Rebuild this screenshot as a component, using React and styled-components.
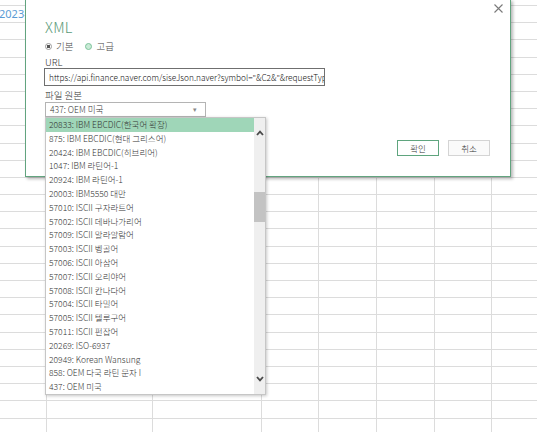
import React from 'react';
import styled, { createGlobalStyle } from 'styled-components';

const GlobalStyle = createGlobalStyle`
  html, body {
    margin: 0;
    padding: 0;
    background: #fff;
    overflow: hidden;
  }
  body {
    font-family: "Noto Sans CJK KR", "Noto Sans", sans-serif;
  }
`;

const COLUMNS = [47, 106, 109, 57, 58, 58, 57, 45];
const ROW_COUNT = 26;

const ENCODINGS = [
  '20833: IBM EBCDIC(한국어 확장)',
  '875: IBM EBCDIC(현대 그리스어)',
  '20424: IBM EBCDIC(히브리어)',
  '1047: IBM 라틴어-1',
  '20924: IBM 라틴어-1',
  '20003: IBM5550 대만',
  '57010: ISCII 구자라트어',
  '57002: ISCII 데바나가리어',
  '57009: ISCII 말라얄람어',
  '57003: ISCII 벵골어',
  '57006: ISCII 아삼어',
  '57007: ISCII 오리야어',
  '57008: ISCII 칸나다어',
  '57004: ISCII 타밀어',
  '57005: ISCII 텔루구어',
  '57011: ISCII 펀잡어',
  '20269: ISO-6937',
  '20949: Korean Wansung',
  '858: OEM 다국 라틴 문자 I',
  '437: OEM 미국',
];

function App() {
  return (
    <Page>
      <GlobalStyle />
      <Sheet>
        {Array.from({ length: ROW_COUNT }).map((_, r) =>
          COLUMNS.map((w, c) => (
            <Cell key={`${r}-${c}`} $last={c === COLUMNS.length - 1}>
              {r === 1 && c === 0 ? <DateText>2023-01-02</DateText> : null}
            </Cell>
          ))
        )}
      </Sheet>

      <Dialog>
        <CloseButton aria-label="닫기">
          <svg width="9" height="9" viewBox="0 0 9 9">
            <path d="M0.5 0.5 L8.5 8.5 M8.5 0.5 L0.5 8.5" stroke="#7a7a7a" strokeWidth="1.1" />
          </svg>
        </CloseButton>
        <Title>XML</Title>
        <RadioRow>
          <RadioOption>
            <Radio $checked />
            기본
          </RadioOption>
          <RadioOption>
            <Radio $hover />
            고급
          </RadioOption>
        </RadioRow>
        <Label>URL</Label>
        <UrlInput>https://api.finance.naver.com/siseJson.naver?symbol="&C2&"&requestTyp</UrlInput>
        <Label $gap>파일 원본</Label>
        <SelectWrap>
          <SelectBox>
            437: OEM 미국
            <Caret>▾</Caret>
          </SelectBox>
          <DropList>
            <Items>
              {ENCODINGS.map((e, i) => (
                <Item key={e} $active={i === 0}>{e}</Item>
              ))}
            </Items>
            <ScrollBar>
              <ScrollArrow>
                <svg width="8" height="6" viewBox="0 0 8 6">
                  <path d="M1 5 L4 1.6 L7 5" fill="none" stroke="#4a4a4a" strokeWidth="1.8" />
                </svg>
              </ScrollArrow>
              <Track>
                <Thumb $offset={44} />
              </Track>
              <ScrollArrow>
                <svg width="8" height="6" viewBox="0 0 8 6">
                  <path d="M1 1 L4 4.4 L7 1" fill="none" stroke="#4a4a4a" strokeWidth="1.8" />
                </svg>
              </ScrollArrow>
            </ScrollBar>
          </DropList>
        </SelectWrap>
        <ButtonRow>
          <Button $primary>확인</Button>
          <Button>취소</Button>
        </ButtonRow>
      </Dialog>
    </Page>
  );
}

export default App;

const Page = styled.div`
  position: relative;
  width: 556px;
  height: 432px;
  overflow: hidden;
  background: #fff;
`;

const Sheet = styled.div`
  display: grid;
  grid-template-columns: ${COLUMNS.map((w) => `${w}px`).join(' ')};
  grid-template-rows: 6px repeat(${ROW_COUNT - 1}, 17.2px);
  width: 537px;
`;

const Cell = styled.div`
  box-sizing: border-box;
  border-bottom: 1px solid #dcdcdc;
  border-right: ${(p) => (p.$last ? 'none' : '1px solid #dcdcdc')};
  overflow: visible;
  white-space: nowrap;
`;

const DateText = styled.div`
  font-family: "Noto Sans", sans-serif;
  font-size: 11px;
  line-height: 16px;
  color: #5b9bd5;
  margin-left: -1px;
`;

const Dialog = styled.div`
  position: absolute;
  left: 25px;
  top: -1px;
  width: 486px;
  height: 178px;
  box-sizing: border-box;
  background: #fff;
  border: 1px solid #62a47f;
  box-shadow: 2px 2px 3px rgba(0, 0, 0, 0.28);
  display: flex;
  flex-direction: column;
  align-items: flex-start;
  padding: 0 0 0 19px;
  color: #333;
  font-weight: 300;
`;

const CloseButton = styled.div`
  position: absolute;
  top: 4px;
  right: 7px;
  width: 9px;
  height: 9px;
  display: flex;
`;

const Title = styled.div`
  margin-top: 19px;
  font-size: 14.5px;
  line-height: 16px;
  color: #5a9a78;
  letter-spacing: 0.3px;
`;

const RadioRow = styled.div`
  display: flex;
  gap: 12px;
  margin-top: 5px;
  font-size: 9.5px;
  line-height: 12px;
  color: #444;
`;

const RadioOption = styled.div`
  display: flex;
  align-items: center;
  gap: 4px;
`;

const Radio = styled.span`
  box-sizing: border-box;
  width: 7px;
  height: 7px;
  border-radius: 50%;
  border: 1px solid ${(p) => (p.$hover ? '#7cc39a' : '#9a9a9a')};
  background: ${(p) =>
    p.$checked
      ? 'radial-gradient(circle, #555 0 1.6px, #fff 2px)'
      : p.$hover
      ? '#c9ead6'
      : '#fff'};
`;

const Label = styled.div`
  font-size: 9.5px;
  line-height: 11px;
  margin-top: ${(p) => (p.$gap ? '4px' : '5px')};
  color: #333;
`;

const UrlInput = styled.div`
  box-sizing: border-box;
  width: 281px;
  height: 18px;
  margin-left: -1px;
  border: 1px solid #6f6f6f;
  padding: 0 0 0 4px;
  font-size: 8.3px;
  line-height: 16px;
  color: #111;
  white-space: nowrap;
  overflow: hidden;
`;

const SelectWrap = styled.div`
  position: relative;
  margin-top: 1px;
`;

const SelectBox = styled.div`
  box-sizing: border-box;
  width: 161px;
  height: 15px;
  border: 1px solid #b4b4b4;
  padding: 0 0 0 4px;
  font-size: 8.6px;
  line-height: 13px;
  color: #333;
  display: flex;
  align-items: center;
  justify-content: space-between;
`;

const Caret = styled.span`
  font-size: 7px;
  color: #888;
  margin-right: 8px;
`;

const DropList = styled.div`
  position: absolute;
  top: 15px;
  left: 0;
  width: 221px;
  height: 278px;
  box-sizing: border-box;
  border: 1px solid #c6c6c6;
  background: #fff;
  box-shadow: 1px 1px 3px rgba(0, 0, 0, 0.22);
  display: flex;
  z-index: 2;
`;

const Items = styled.div`
  flex: 1;
  display: flex;
  flex-direction: column;
`;

const Item = styled.div`
  height: 13.8px;
  padding-left: 3px;
  font-size: 8.5px;
  line-height: 13.8px;
  color: #333;
  white-space: nowrap;
  background: ${(p) => (p.$active ? '#9fd6b8' : 'transparent')};
`;

const ScrollBar = styled.div`
  width: 11px;
  background: #efefef;
  display: flex;
  flex-direction: column;
`;

const ScrollArrow = styled.div`
  height: 30px;
  display: flex;
  align-items: center;
  justify-content: center;
`;

const Track = styled.div`
  flex: 1;
`;

const Thumb = styled.div`
  margin-top: ${(p) => p.$offset}px;
  height: 30px;
  background: #c3c3c3;
`;

const ButtonRow = styled.div`
  align-self: stretch;
  display: flex;
  justify-content: flex-end;
  gap: 9px;
  margin-top: 23px;
  padding-right: 20px;
`;

const Button = styled.div`
  box-sizing: border-box;
  width: 42px;
  height: 16px;
  border: 1px solid ${(p) => (p.$primary ? '#5fa57e' : '#d4d4d4')};
  background: ${(p) => (p.$primary ? '#fff' : '#fafafa')};
  font-size: 8.5px;
  line-height: 14px;
  text-align: center;
  color: #333;
`;
